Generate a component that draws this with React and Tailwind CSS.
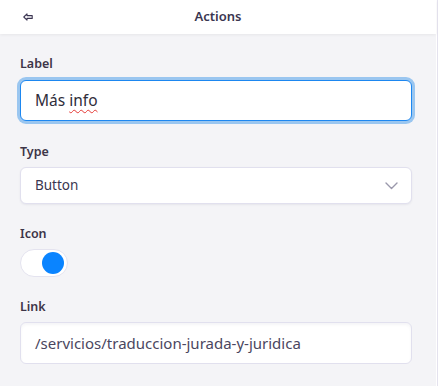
export default function App() {
  return (
    <div className="w-[439px] h-[386px] flex bg-white overflow-hidden" style={{ fontFamily: '"Noto Sans", "Open Sans", sans-serif' }}>
      <div className="w-[436px] h-full flex flex-col bg-[#f4f4f7]">
        {/* Header */}
        <div className="h-[34px] bg-white flex items-center relative shadow-[0_1px_3px_rgba(0,0,0,0.06)] shrink-0">
          <svg className="absolute left-[23px] top-[13px] w-[10px] h-[8px]" viewBox="0 0 10 8" fill="none">
            <path d="M0.8 4 L4 0.9 V2.6 H9.2 V5.4 H4 V7.1 Z" stroke="#3b3552" strokeWidth="1.1" strokeLinejoin="round" />
          </svg>
          <span className="w-full text-center text-[13px] font-semibold text-[#3a3650]">Actions</span>
        </div>

        {/* Form */}
        <div className="flex flex-col pl-5 pr-6 pt-[21px]">
          <label className="text-[12.5px] font-semibold text-[#3d3548] leading-[18px]">Label</label>
          <div className="mt-[7px] h-[41px] rounded-[6px] border-[1.5px] border-[#1d87f0] bg-white ring-[3px] ring-[#9ac6f0] flex items-center pl-[14px] text-[15.5px] text-[#2f2d3a]">
            <span>Más&nbsp;</span>
            <span className="underline decoration-wavy decoration-[#e53935] decoration-1 underline-offset-[3px]">info</span>
          </div>

          <label className="mt-[22px] text-[12.5px] font-semibold text-[#3d3548] leading-[18px]">Type</label>
          <div className="mt-[6px] h-[37px] rounded-[6px] border border-[#e1e0ee] bg-white shadow-[0_1px_2px_rgba(60,60,100,0.08)] flex items-center justify-between pl-[14px] pr-[13px] text-[13.5px] text-[#3a3650]">
            <span>Button</span>
            <svg className="w-[13px] h-[8px]" viewBox="0 0 13 8" fill="none">
              <path d="M1 1 L6.5 6.5 L12 1" stroke="#9a98ab" strokeWidth="1.4" strokeLinecap="round" strokeLinejoin="round" />
            </svg>
          </div>

          <label className="mt-[21px] text-[12.5px] font-semibold text-[#3d3548] leading-[18px]">Icon</label>
          <div className="mt-[6px] w-[48px] h-[28px] rounded-full bg-white border border-[#e4e3ef] flex items-center justify-end pr-[3px]">
            <div className="w-[22px] h-[22px] rounded-full bg-[#0a84ff]" />
          </div>

          <label className="mt-[21px] text-[12.5px] font-semibold text-[#3d3548] leading-[18px]">Link</label>
          <div className="mt-[6px] h-[42px] rounded-[6px] border border-[#e1e0ee] bg-white shadow-[inset_0_2px_3px_rgba(60,60,100,0.05)] flex items-center pl-[14px] text-[15px] text-[#4a4660]">
            /servicios/traduccion-jurada-y-juridica
          </div>
        </div>
      </div>
      <div className="w-[3px] h-full flex justify-center">
        <div className="w-px h-full bg-[#e4e2ee]" />
      </div>
    </div>
  );
}
